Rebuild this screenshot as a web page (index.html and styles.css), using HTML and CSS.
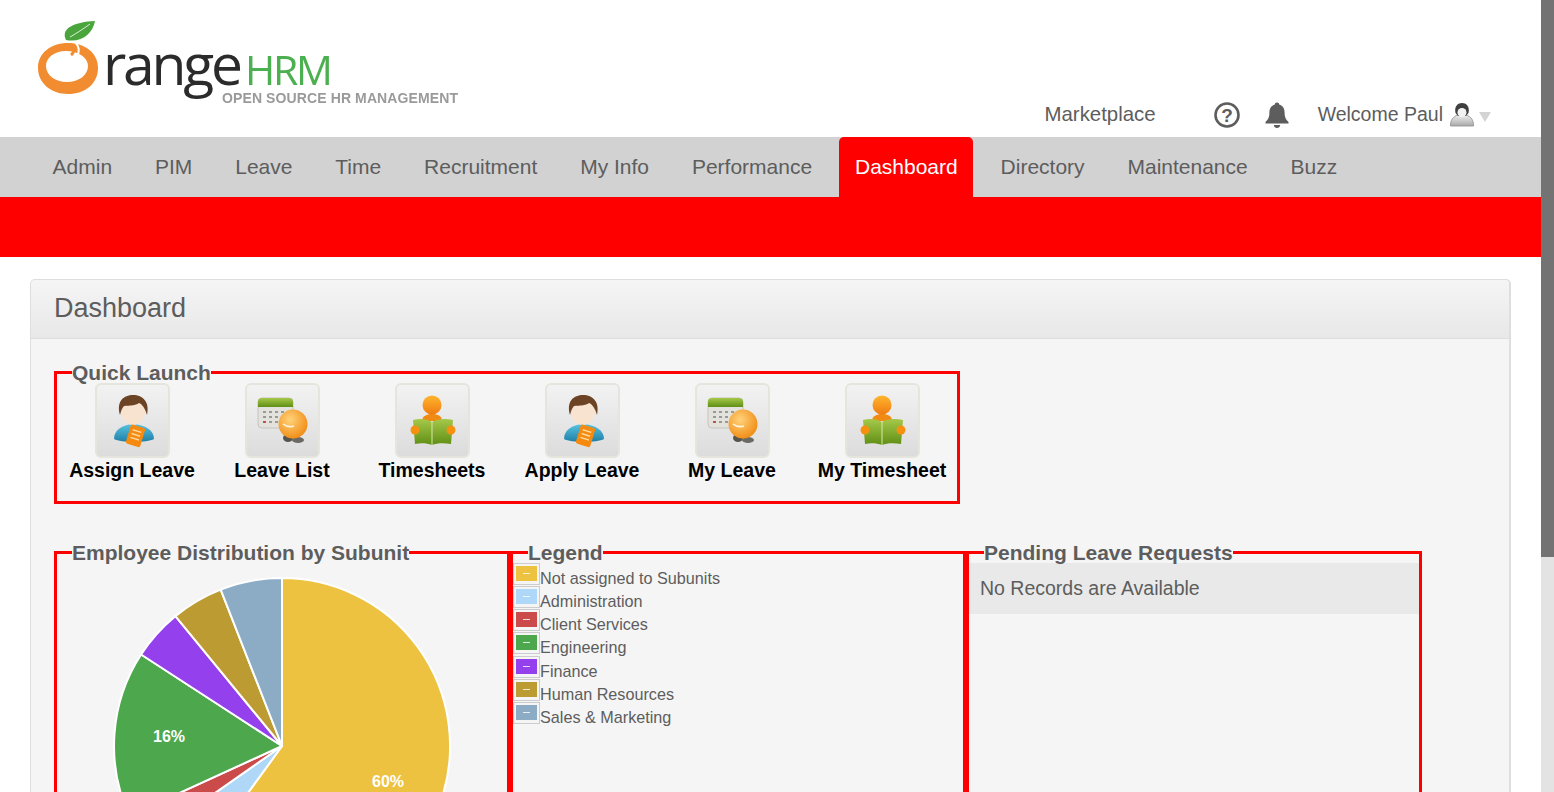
FILE: index.html
```html
<!DOCTYPE html>
<html lang="en">
<head>
    <meta charset="UTF-8">
    <meta name="viewport" content="width=device-width, initial-scale=1.0">
    <title>OrangeHRM Dashboard</title>
    <link rel="stylesheet" href="styles.css">
</head>
<body>
    <!-- Shared icon parts -->
    <svg class="icon-defs" width="0" height="0">
        <defs>
            <linearGradient id="gradOrange" x1="0" y1="0" x2="0" y2="1">
                <stop offset="0" stop-color="#ffb52e"/>
                <stop offset="1" stop-color="#f07c12"/>
            </linearGradient>
            <linearGradient id="gradGreen" x1="0" y1="0" x2="0" y2="1">
                <stop offset="0" stop-color="#a5c84a"/>
                <stop offset="1" stop-color="#5f8f14"/>
            </linearGradient>
            <linearGradient id="gradBlue" x1="0" y1="0" x2="0" y2="1">
                <stop offset="0" stop-color="#58c3e0"/>
                <stop offset="1" stop-color="#1f7fa6"/>
            </linearGradient>
            <radialGradient id="gradBall" cx="0.4" cy="0.35" r="0.7">
                <stop offset="0" stop-color="#ffd27a"/>
                <stop offset="1" stop-color="#f08a12"/>
            </radialGradient>
            <linearGradient id="gradUser" x1="0" y1="0" x2="0" y2="1">
                <stop offset="0" stop-color="#efefef"/>
                <stop offset="1" stop-color="#a9a9a9"/>
            </linearGradient>
            <symbol id="iconPerson" viewBox="0 0 75 75">
                <path d="M19 56 C19 47 27 42 38 41 C50 42 59 47 59 56 C52 60 26 60 19 56 Z" fill="url(#gradBlue)"/>
                <ellipse cx="38" cy="28" rx="12" ry="14" fill="#f8e3d0"/>
                <path d="M25 32 C21 18 29 12 38 12 C48 12 55 19 52 32 C50 25 47 21 44 20 C38 24 31 22 29 23 C27 25 26 28 25 32 Z" fill="#6d4325"/>
                <g transform="rotate(17 41 53)">
                    <rect x="33" y="43" width="15" height="20" rx="2" fill="#f58a0f"/>
                    <path d="M36 48 H45 M36 52 H45 M36 56 H45" stroke="#ffd9a0" stroke-width="1.5"/>
                </g>
            </symbol>
            <symbol id="iconCalendar" viewBox="0 0 75 75">
                <rect x="13" y="15" width="35" height="30" rx="4" fill="#e4e2dc" stroke="#c6c4bc"/>
                <path d="M13 24 V19 Q13 15 17 15 H44 Q48 15 48 19 V24 Z" fill="url(#gradGreen)"/>
                <path d="M18 28 h3 v2 h-3 z M24 28 h3 v2 h-3 z M30 28 h3 v2 h-3 z M36 28 h3 v2 h-3 z M18 33 h3 v2 h-3 z M24 33 h3 v2 h-3 z M30 33 h3 v2 h-3 z M18 38 h3 v2 h-3 z M24 38 h3 v2 h-3 z M30 38 h3 v2 h-3 z" fill="#9a9a94"/>
                <path d="M18 38 h3 v2 h-3 z" fill="#c0504a"/>
                <ellipse cx="43" cy="55" rx="5" ry="4" fill="#55544f"/>
                <ellipse cx="53" cy="57" rx="6" ry="3" fill="#6a6963"/>
                <circle cx="48" cy="41" r="14.5" fill="url(#gradBall)"/>
                <path d="M38 41 Q43 45 49 43" fill="none" stroke="#fff6e0" stroke-width="1.6"/>
            </symbol>
            <symbol id="iconReader" viewBox="0 0 75 75">
                <path d="M27 38 C27 33 32 31 37 31 C43 31 47 33 47 38 Z" fill="#f08a12"/>
                <circle cx="37" cy="22" r="9.5" fill="url(#gradOrange)"/>
                <path d="M18 37 C25 35 32 36 37 39 C42 36 50 35 58 37 L56 61 C49 60 42 60 37 62 C32 60 25 60 20 61 Z" fill="url(#gradGreen)"/>
                <path d="M37 39 V62" stroke="#d7e6a8" stroke-width="1"/>
                <circle cx="20" cy="47" r="4.5" fill="#f5910f"/>
                <circle cx="56" cy="47" r="4.5" fill="#f5910f"/>
            </symbol>
        </defs>
    </svg>

    <div class="page">
        <div class="content">
            <header class="topbar">
                <svg class="logo" width="460" height="137" viewBox="0 0 460 137">
                    <path d="M66 40 C60 28 75 22 95 21 C93 33 82 43 66 40 Z" fill="#4aa63c"/>
                    <path d="M70 37 C77 33 83 29 90 24" stroke="#ffffff" stroke-width="0.8" fill="none"/>
                    <path fill-rule="evenodd" d="M68 43 C85 43 98 53 98 68 C98 84 85 94 68 94 C51 94 38 83 38 68 C38 53 51 43 68 43 Z M66 51 C54 51 46 58 46 66 C46 75 55 82 67 82 C79 82 88 75 88 66 C88 58 79 51 66 51 Z" fill="#f28c30"/>
                    <path d="M69 46 C74 48 75 52 71 55" stroke="#f28c30" stroke-width="3" fill="none"/>
                    <path d="M75 42 C79 46 80 51 77 57" stroke="#ffffff" stroke-width="2" fill="none"/>
                    <text class="logo-word" x="103" y="85" textLength="140">range</text>
                    <text class="logo-hrm" x="245" y="85" textLength="88">HRM</text>
                    <text class="logo-tag" x="222" y="103" textLength="236">OPEN SOURCE HR MANAGEMENT</text>
                </svg>
                <div class="tools">
                    <a class="tool-link tool-market">Marketplace</a>
                    <svg class="tool-help" width="28" height="28" viewBox="0 0 28 28">
                        <circle cx="14" cy="14" r="11.5" fill="none" stroke="#5d5d5d" stroke-width="2.6"/>
                        <text x="14" y="20.5" text-anchor="middle" class="help-mark">?</text>
                    </svg>
                    <svg class="tool-bell" width="26" height="28" viewBox="0 0 26 28">
                        <path d="M13 1.5 C14.4 1.5 15.2 2.4 15.2 3.6 C19 4.6 20.6 7.8 20.6 11.5 C20.6 16.5 22 18.5 24.5 21 V22.5 H1.5 V21 C4 18.5 5.4 16.5 5.4 11.5 C5.4 7.8 7 4.6 10.8 3.6 C10.8 2.4 11.6 1.5 13 1.5 Z" fill="#5d5d5d"/>
                        <path d="M9.8 24 H16.2 C16 26 14.8 27 13 27 C11.2 27 10 26 9.8 24 Z" fill="#5d5d5d"/>
                    </svg>
                    <a class="tool-link tool-welcome">Welcome Paul</a>
                    <svg class="tool-avatar" width="26" height="28" viewBox="0 0 26 28">
                        <path d="M1.5 25 C1.5 19 3.5 16 9 14 H17 C22.5 16 24.5 19 24.5 25 Z" fill="url(#gradUser)" stroke="#8d8d8d" stroke-width="0.8"/>
                        <path d="M6.5 12 C5 5 9 2 13 2 C17 2 21 5 19.5 12 L17 15 H9 Z" fill="#3f3f3f"/>
                        <ellipse cx="13" cy="11.5" rx="4.5" ry="4.5" fill="#f2f2f2"/>
                    </svg>
                    <span class="tool-caret"></span>
                </div>
            </header>

            <nav class="menu">
                <a class="menu-item">Admin</a>
                <a class="menu-item">PIM</a>
                <a class="menu-item">Leave</a>
                <a class="menu-item">Time</a>
                <a class="menu-item">Recruitment</a>
                <a class="menu-item">My Info</a>
                <a class="menu-item">Performance</a>
                <a class="menu-item active">Dashboard</a>
                <a class="menu-item">Directory</a>
                <a class="menu-item">Maintenance</a>
                <a class="menu-item">Buzz</a>
            </nav>
            <div class="subbar"></div>

            <section class="panel">
                <div class="panel-head">Dashboard</div>
                <div class="panel-body">
                    <fieldset class="box box-quick">
                        <legend>Quick Launch</legend>
                        <div class="quick-list">
                            <a class="quick-item">
                                <span class="tile"><svg width="75" height="75"><use href="#iconPerson"/></svg></span>
                                <span class="quick-label">Assign Leave</span>
                            </a>
                            <a class="quick-item">
                                <span class="tile"><svg width="75" height="75"><use href="#iconCalendar"/></svg></span>
                                <span class="quick-label">Leave List</span>
                            </a>
                            <a class="quick-item">
                                <span class="tile"><svg width="75" height="75"><use href="#iconReader"/></svg></span>
                                <span class="quick-label">Timesheets</span>
                            </a>
                            <a class="quick-item">
                                <span class="tile"><svg width="75" height="75"><use href="#iconPerson"/></svg></span>
                                <span class="quick-label">Apply Leave</span>
                            </a>
                            <a class="quick-item">
                                <span class="tile"><svg width="75" height="75"><use href="#iconCalendar"/></svg></span>
                                <span class="quick-label">My Leave</span>
                            </a>
                            <a class="quick-item">
                                <span class="tile"><svg width="75" height="75"><use href="#iconReader"/></svg></span>
                                <span class="quick-label">My Timesheet</span>
                            </a>
                        </div>
                    </fieldset>

                    <div class="box-row">
                        <fieldset class="box">
                            <legend>Employee Distribution by Subunit</legend>
                            <svg class="pie" width="340" height="340" viewBox="-170 -170 340 340">
                                <g stroke="#ffffff" stroke-width="2" stroke-linejoin="round">
                                    <path d="M0 0 L0 -168 A168 168 0 1 1 -98.7 135.9 Z" fill="#edc240"/>
                                    <path d="M0 0 L-98.7 135.9 A168 168 0 0 1 -137.6 96.4 Z" fill="#afd8f8"/>
                                    <path d="M0 0 L-137.6 96.4 A168 168 0 0 1 -152.7 69.9 Z" fill="#cb4b4b"/>
                                    <path d="M0 0 L-152.7 69.9 A168 168 0 0 1 -140.9 -91.5 Z" fill="#4da74d"/>
                                    <path d="M0 0 L-140.9 -91.5 A168 168 0 0 1 -106.6 -129.8 Z" fill="#9440ed"/>
                                    <path d="M0 0 L-106.6 -129.8 A168 168 0 0 1 -61.3 -156.4 Z" fill="#bd9b33"/>
                                    <path d="M0 0 L-61.3 -156.4 A168 168 0 0 1 0 -168 Z" fill="#8cacc6"/>
                                </g>
                                <text class="pie-label" x="-113" y="-4" text-anchor="middle">16%</text>
                                <text class="pie-label" x="106" y="41" text-anchor="middle">60%</text>
                            </svg>
                        </fieldset>
                        <fieldset class="box">
                            <legend>Legend</legend>
                            <ul class="legend-list">
                                <li><span class="swatch"><i class="c-yellow"></i></span>Not assigned to Subunits</li>
                                <li><span class="swatch"><i class="c-sky"></i></span>Administration</li>
                                <li><span class="swatch"><i class="c-red"></i></span>Client Services</li>
                                <li><span class="swatch"><i class="c-green"></i></span>Engineering</li>
                                <li><span class="swatch"><i class="c-purple"></i></span>Finance</li>
                                <li><span class="swatch"><i class="c-gold"></i></span>Human Resources</li>
                                <li><span class="swatch"><i class="c-slate"></i></span>Sales &amp; Marketing</li>
                            </ul>
                        </fieldset>
                        <fieldset class="box">
                            <legend>Pending Leave Requests</legend>
                            <div class="no-records">No Records are Available</div>
                        </fieldset>
                    </div>
                </div>
            </section>
        </div>

        <div class="scrollbar"><div class="scrollbar-thumb"></div></div>
    </div>
</body>
</html>
```

FILE: styles.css
```css
html, body {
    margin: 0;
    padding: 0;
    height: 792px;
    overflow: hidden;
    background: #fff;
}

body {
    font-family: "Liberation Sans", Arial, sans-serif;
    color: #5d5d5d;
}

.icon-defs {
    display: block;
}

.page {
    display: flex;
    height: 792px;
}

.content {
    flex: 1;
    min-width: 0;
    overflow: hidden;
}

.scrollbar {
    width: 13px;
    background: #e3e3e3;
}

.scrollbar-thumb {
    height: 557px;
    background: #737373;
}

/* Top bar */
.topbar {
    display: flex;
    justify-content: space-between;
    height: 137px;
}

.logo {
    filter: blur(0.5px);
    flex: none;
}

.logo-word {
    font-family: "Open Sans", sans-serif;
    font-size: 57px;
    fill: #2b2b2b;
}

.logo-hrm {
    font-family: "Open Sans", sans-serif;
    font-size: 41px;
    fill: #4caf50;
}

.logo-tag {
    font-family: "Liberation Sans", sans-serif;
    font-weight: bold;
    font-size: 14px;
    fill: #9a9a9a;
}

.tools {
    display: flex;
    align-items: center;
    height: 28px;
    margin-top: 101px;
    padding-right: 50px;
}

.tool-link {
    margin-bottom: 2px;
}

.tool-market {
    font-size: 20.4px;
}

.tool-welcome {
    font-size: 19.5px;
}

.tool-help {
    margin-left: 57px;
}

.help-mark {
    font-family: "Liberation Sans", sans-serif;
    font-weight: bold;
    font-size: 19px;
    fill: #5d5d5d;
}

.tool-bell {
    margin-left: 23px;
    margin-right: 28px;
}

.tool-avatar {
    margin-left: 6px;
    filter: blur(0.4px);
}

.tool-caret {
    width: 0;
    height: 0;
    margin-left: 4px;
    margin-top: 4px;
    border-left: 6px solid transparent;
    border-right: 6px solid transparent;
    border-top: 10px solid #d4d4d4;
}

/* Main menu */
.menu {
    display: flex;
    height: 60px;
    padding-left: 37px;
    background: #d2d2d2;
}

.menu-item {
    margin-right: 11.7px;
    padding: 0 15.6px;
    font-size: 21px;
    line-height: 60px;
}

.menu-item.active {
    background: #f00;
    color: #fff;
    border-radius: 5px 5px 0 0;
}

.subbar {
    height: 60px;
    background: #f00;
}

/* Dashboard panel */
.panel {
    margin: 22px 30px 0;
    border: 1px solid #dedede;
    border-right-width: 2px;
    border-radius: 5px;
    background: #f5f5f5;
}

.panel-head {
    height: 58px;
    padding-left: 23px;
    font-size: 27px;
    line-height: 56px;
    border-bottom: 1px solid #dedede;
    border-radius: 5px 5px 0 0;
    background: linear-gradient(#f5f5f5, #e8e8e8);
}

.panel-body {
    padding: 23px 23px 0;
}

.box {
    box-sizing: border-box;
    min-width: 0;
    margin: 0;
    padding: 0;
    border: 3px solid #f00;
}

.box legend {
    margin-left: 15px;
    padding: 0;
    font-size: 21px;
    font-weight: bold;
    line-height: 21px;
}

.box-quick {
    width: 906px;
    height: 142px;
}

.box-row {
    display: flex;
    margin-top: 38px;
}

.box-row .box {
    width: 456px;
    height: 480px;
}

/* Quick launch */
.quick-list {
    display: flex;
}

.quick-item {
    display: flex;
    flex-direction: column;
    align-items: center;
    width: 150px;
}

.tile {
    display: flex;
    box-sizing: border-box;
    width: 75px;
    height: 75px;
    border: 2px solid #e6e5dd;
    border-radius: 6px;
    background: linear-gradient(#f2f2f2, #dcdcdc);
}

.tile svg {
    flex: none;
    margin: -2px;
}

.quick-label {
    font-size: 19.5px;
    font-weight: bold;
    line-height: 24px;
    color: #000;
    white-space: nowrap;
}

/* Pie */
.pie {
    display: block;
    margin: 13px 0 0 55px;
}

.pie-label {
    font-family: "Liberation Sans", sans-serif;
    font-size: 16px;
    font-weight: bold;
    fill: #fff;
}

/* Legend */
.legend-list {
    display: grid;
    grid-auto-rows: 23.17px;
    margin: 0;
    padding: 0;
    list-style: none;
    font-size: 16.2px;
}

.legend-list li {
    display: flex;
    align-items: flex-start;
    line-height: 30px;
    height: 23.17px;
}

.swatch {
    display: block;
    box-sizing: border-box;
    flex: none;
    width: 27px;
    height: 22px;
    padding: 2px;
    border: 1px solid #ccc;
}

.swatch i {
    display: flex;
    align-items: center;
    justify-content: center;
    width: 21px;
    height: 15px;
}

.swatch i::after {
    content: "";
    width: 7px;
    height: 1px;
    background: rgba(255, 255, 255, 0.8);
}

.c-yellow { background: #edc240; }
.c-sky { background: #afd8f8; }
.c-red { background: #cb4b4b; }
.c-green { background: #4da74d; }
.c-purple { background: #9440ed; }
.c-gold { background: #bd9b33; }
.c-slate { background: #8cacc6; }

/* Pending requests */
.no-records {
    padding-left: 11px;
    font-size: 19.5px;
    line-height: 51px;
    background: #e9e9e9;
}
```
